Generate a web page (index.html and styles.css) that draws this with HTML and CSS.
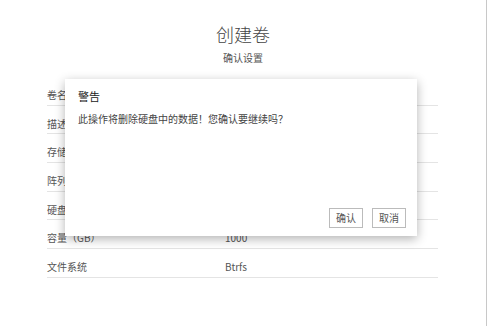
FILE: index.html
```html
<!DOCTYPE html>
<html lang="zh-CN">
  <head>
    <meta charset="UTF-8" />
    <meta name="viewport" content="width=device-width, initial-scale=1.0" />
    <title>创建卷</title>
    <link rel="stylesheet" href="styles.css">
  </head>
  <body>
    <div class="page">
      <h1>创建卷</h1>
      <p class="subtitle">确认设置</p>
      <div class="summary">
        <div class="row"><span class="label">卷名</span><span class="value">vol1</span></div>
        <div class="row"><span class="label">描述</span><span class="value"></span></div>
        <div class="row"><span class="label">存储池</span><span class="value">pool1</span></div>
        <div class="row"><span class="label">阵列类型</span><span class="value">RAID 1</span></div>
        <div class="row"><span class="label">硬盘</span><span class="value">sda, sdb</span></div>
        <div class="row"><span class="label">容量（GB）</span><span class="value">1000</span></div>
        <div class="row"><span class="label">文件系统</span><span class="value">Btrfs</span></div>
      </div>

      <div class="dialog">
        <h2>警告</h2>
        <p class="message">此操作将删除硬盘中的数据！您确认要继续吗？</p>
        <div class="actions">
          <button>确认</button>
          <button>取消</button>
        </div>
      </div>
    </div>
  </body>
</html>
```

FILE: styles.css
```css
body {
  margin: 0;
  background-color: #fff;
  font-family: "Noto Sans CJK SC", "Noto Sans", sans-serif;
  color: #555;
}

.page {
  position: relative;
  width: 486px;
  height: 326px;
  border-right: 1px solid #c8c8c8;
}

h1 {
  margin: 0;
  padding-top: 22px;
  text-align: center;
  font-size: 18px;
  line-height: 24px;
  font-weight: 300;
  color: #444;
}

.subtitle {
  margin: 5px 0 0;
  text-align: center;
  font-size: 10px;
  line-height: 14px;
  color: #555;
}

.summary {
  margin: 12px 0 0 47px;
  width: 391px;
}

.row {
  display: flex;
  box-sizing: border-box;
  height: 28.67px;
  padding-top: 12px;
  border-bottom: 1px solid #e4e4e4;
  font-size: 10px;
  line-height: 12px;
}

.label {
  width: 178px;
}

.dialog {
  position: absolute;
  left: 65px;
  top: 79px;
  box-sizing: border-box;
  width: 352px;
  height: 157px;
  padding: 10px 11px 8px 13px;
  display: flex;
  flex-direction: column;
  background-color: #fff;
  box-shadow: 0 3px 10px rgba(0, 0, 0, 0.3);
}

.dialog h2 {
  margin: 0;
  font-size: 11px;
  line-height: 14px;
  font-weight: normal;
  color: #222;
}

.message {
  margin: 9px 0 0;
  font-size: 10px;
  line-height: 14px;
  color: #444;
}

.actions {
  margin-top: auto;
  display: flex;
  justify-content: flex-end;
  gap: 9px;
}

button {
  height: 20px;
  padding: 0 6px;
  font-family: inherit;
  font-size: 10px;
  line-height: 18px;
  color: #555;
  background-color: #fff;
  border: 1px solid #bbb;
  border-radius: 0;
}
```
